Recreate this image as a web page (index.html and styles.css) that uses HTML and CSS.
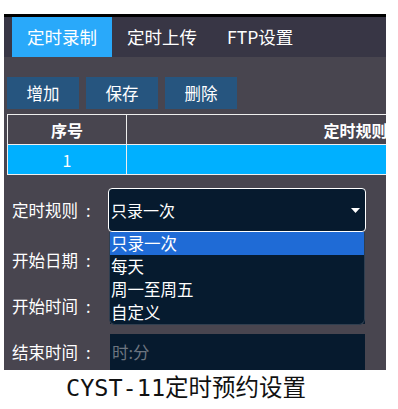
FILE: index.html
```html
<!DOCTYPE html>
<html lang="zh-CN">
<head>
    <meta charset="UTF-8">
    <meta name="viewport" content="width=device-width, initial-scale=1.0">
    <title>定时预约设置</title>
    <link rel="stylesheet" href="styles.css">
</head>
<body>
    <div class="panel">
        <!-- Faner -->
        <div class="tabs">
            <div class="tab active">定时录制</div>
            <div class="tab">定时上传</div>
            <div class="tab">FTP设置</div>
        </div>

        <!-- Verktøylinje -->
        <div class="toolbar">
            <button class="btn">增加</button>
            <button class="btn">保存</button>
            <button class="btn">删除</button>
        </div>

        <!-- Regeltabell -->
        <table class="rules">
            <thead>
                <tr>
                    <th class="col-no">序号</th>
                    <th>定时规则</th>
                </tr>
            </thead>
            <tbody>
                <tr class="selected">
                    <td>1</td>
                    <td></td>
                </tr>
            </tbody>
        </table>

        <!-- Skjema -->
        <div class="form">
            <div class="row row-select">
                <label class="label">定时规则<span class="colon">:</span></label>
                <div class="select-wrap">
                    <div class="select">
                        <span>只录一次</span>
                        <svg class="arrow" width="9" height="5" viewBox="0 0 9 5"><path d="M0 0H9L4.5 5Z" fill="#fff"/></svg>
                    </div>
                    <ul class="options">
                        <li class="option hl">只录一次</li>
                        <li class="option">每天</li>
                        <li class="option">周一至周五</li>
                        <li class="option">自定义</li>
                    </ul>
                </div>
            </div>
            <div class="row">
                <label class="label">开始日期<span class="colon">:</span></label>
                <div class="field"></div>
            </div>
            <div class="row">
                <label class="label">开始时间<span class="colon">:</span></label>
                <div class="field"></div>
            </div>
            <div class="row">
                <label class="label">结束时间<span class="colon">:</span></label>
                <div class="field placeholder">时:分</div>
            </div>
        </div>
    </div>

    <p class="caption">CYST-11定时预约设置</p>
</body>
</html>
```

FILE: styles.css
```css
body {
    margin: 0;
    background: #fff;
    font-family: "Noto Sans CJK SC", sans-serif;
}
.panel {
    box-sizing: border-box;
    margin: 14px 0 0 4px;
    width: 382px;
    height: 356px;
    background: #48454f;
    border-top: 3px solid #000;
    overflow: hidden;
}
.tabs {
    display: flex;
    height: 40px;
    padding-left: 8px;
    background: #383645;
}
.tab {
    padding: 0 15px;
    line-height: 40px;
    font-size: 17.5px;
    color: #fff;
}
.tab.active {
    background: #29a9fa;
}
.toolbar {
    display: flex;
    gap: 7px;
    padding: 20px 0 0 3px;
}
.btn {
    width: 72px;
    height: 32px;
    padding: 0;
    border: none;
    background: #26557f;
    color: #fff;
    font-family: "Noto Sans CJK SC", sans-serif;
    font-size: 16.5px;
}
.rules {
    margin: 5px 0 0 3px;
    width: 578px;
    border-collapse: collapse;
    color: #fff;
    font-size: 16px;
}
.rules th, .rules td {
    height: 29px;
    padding: 0;
    border: 1px solid #eee;
    text-align: center;
}
.rules th {
    font-weight: bold;
}
.rules .col-no {
    width: 118px;
}
.rules .selected td {
    background: #00b0ff;
}
.form {
    margin-top: 13px;
}
.row {
    display: flex;
    align-items: center;
    height: 36px;
    margin-top: 10px;
}
.row-select {
    height: 44px;
    margin-top: 0;
}
.label {
    box-sizing: border-box;
    width: 104px;
    padding-left: 8px;
    font-size: 16.5px;
    color: #fff;
}
.colon {
    margin-left: 8px;
}
.select-wrap {
    position: relative;
}
.select {
    box-sizing: border-box;
    display: flex;
    align-items: center;
    justify-content: space-between;
    width: 258px;
    height: 44px;
    padding: 0 5px 0 2px;
    border: 1px solid #fff;
    border-radius: 4px;
    background: #061a2e;
    color: #fff;
    font-size: 16px;
}
.options {
    position: absolute;
    top: 44px;
    left: 1px;
    box-sizing: border-box;
    width: 256px;
    margin: 0;
    padding: 0;
    list-style: none;
    background: #061b2f;
    border: 1px solid #2f3e4f;
    border-top: none;
    border-radius: 0 0 6px 6px;
    overflow: hidden;
    color: #fff;
    font-size: 16.5px;
}
.option {
    height: 23px;
    line-height: 23px;
    padding-left: 1px;
}
.option.hl {
    background: #1f6bd6;
}
.field {
    box-sizing: border-box;
    width: 255px;
    height: 36px;
    margin-left: 2px;
    padding-left: 2px;
    background: #061a2e;
    line-height: 36px;
    font-size: 16.5px;
}
.placeholder {
    color: #6d7580;
}
.caption {
    margin: 3px 0 0;
    padding-left: 66px;
    font-family: "DejaVu Sans Mono", "Noto Sans CJK SC", monospace;
    font-size: 23.5px;
    line-height: 30px;
    color: #111;
}
```
